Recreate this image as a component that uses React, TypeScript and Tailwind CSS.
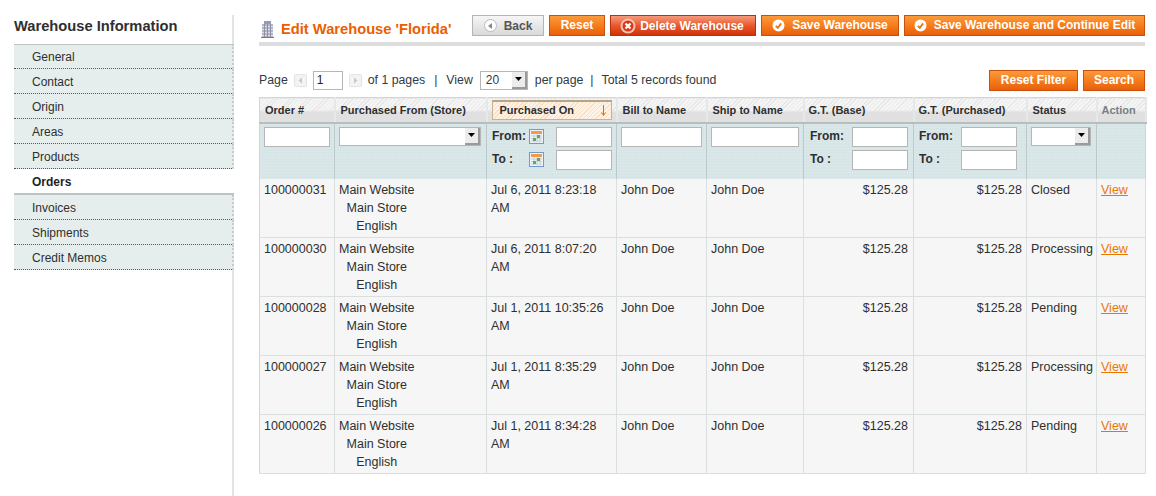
const navItems = ["General", "Contact", "Origin", "Areas", "Products", "Orders", "Invoices", "Shipments", "Credit Memos"];

const orders = [
  { id: "100000031", date: "Jul 6, 2011 8:23:18 AM", status: "Closed" },
  { id: "100000030", date: "Jul 6, 2011 8:07:20 AM", status: "Processing" },
  { id: "100000028", date: "Jul 1, 2011 10:35:26 AM", status: "Pending" },
  { id: "100000027", date: "Jul 1, 2011 8:35:29 AM", status: "Processing" },
  { id: "100000026", date: "Jul 1, 2011 8:34:28 AM", status: "Pending" },
];

const orangeBtn =
  "h-[21px] border border-[#c9500b] bg-gradient-to-b from-[#fb9a3c] via-[#f67d1b] to-[#e85f0c] text-white font-bold text-[12px] leading-[19px] flex items-center justify-center";

function CheckIcon() {
  return (
    <svg width="13" height="13" viewBox="0 0 13 13" className="mr-[7px] shrink-0">
      <circle cx="6.5" cy="6.5" r="6" fill="#fff" />
      <path d="M3.8 6.8 L5.8 8.8 L9.2 4.4" stroke="#e8760f" strokeWidth="1.8" fill="none" />
    </svg>
  );
}

function DeleteIcon() {
  return (
    <svg width="16" height="16" viewBox="0 0 16 16" className="mr-[4px] -ml-[2px] shrink-0">
      <circle cx="8" cy="8" r="7.5" fill="#f6c4b0" />
      <circle cx="8" cy="8" r="5.5" fill="#d8391a" />
      <path d="M5.5 5.5 L10.5 10.5 M10.5 5.5 L5.5 10.5" stroke="#fff" strokeWidth="2.2" />
    </svg>
  );
}

function BuildingIcon() {
  return (
    <svg width="13" height="17" viewBox="0 0 13 17">
      <rect x="3" y="0" width="7" height="3" fill="#9a9bb0" />
      <rect x="1" y="3" width="11" height="13" fill="#b4b5c6" />
      <path d="M1 5.5h11M1 8.5h11M1 11.5h11M1 14.5h11" stroke="#dddee6" strokeWidth="1" />
      <path d="M3.5 3v13M6.5 3v13M9.5 3v13" stroke="#8f90a6" strokeWidth="1" />
      <rect x="0" y="16" width="13" height="1" fill="#77788e" />
    </svg>
  );
}

function PagerArrow({ dir }: { dir: "left" | "right" }) {
  return (
    <span className="w-[13px] h-[13px] border border-[#e4e4e4] bg-[#f3f3f3] rounded-[2px] flex items-center justify-center">
      <svg width="5" height="7" viewBox="0 0 5 7">
        <path d={dir === "left" ? "M4 0.5V6.5L0.5 3.5Z" : "M1 0.5V6.5L4.5 3.5Z"} fill="#c8c8c8" />
      </svg>
    </span>
  );
}

function CalendarIcon() {
  return (
    <svg width="15" height="15" viewBox="0 0 15 15" className="shrink-0">
      <rect x="0.5" y="0.5" width="14" height="14" fill="#eef3f8" stroke="#6f9bcf" />
      <rect x="2" y="2" width="11" height="3" fill="#f49a4a" />
      <path d="M2 7h11M2 9.5h11M2 12h11M5 5.5v8M8 5.5v8M11 5.5v8" stroke="#c5d1dc" strokeWidth="1" />
      <rect x="4" y="9" width="3" height="3" fill="#6aa84f" />
      <rect x="8" y="6" width="3" height="3" fill="#6aa84f" />
    </svg>
  );
}

function SelectBox({ width, value }: { width: string; value?: string }) {
  return (
    <div className={`${width} h-[19px] border border-[#b6b6b6] bg-white flex items-center justify-between`}>
      <span className="pl-[5px] text-[12px]">{value}</span>
      <span className="w-[15px] h-[17px] bg-[#ececec] border-r-2 border-b-2 border-[#9a9a9a] flex items-center justify-center">
        <svg width="7" height="4" viewBox="0 0 7 4">
          <path d="M0 0H7L3.5 4Z" fill="#000" />
        </svg>
      </span>
    </div>
  );
}

const textInput = "block h-5 border border-[#b6b6b6] bg-white";

function RangeFilter({ withIcon }: { withIcon?: boolean }) {
  return (
    <div className="flex flex-col gap-[3px] font-bold text-[12px] text-[#2f2f2f]">
      {["From:", "To :"].map((label) => (
        <div key={label} className="flex items-center justify-between">
          <span className="flex items-center">
            <span className="w-[37px] -mt-[2px]">{label}</span>
            {withIcon && <CalendarIcon />}
          </span>
          <input className={`${textInput} w-[56px]`} readOnly />
        </div>
      ))}
    </div>
  );
}

const thBase =
  "border-r-2 border-[#e3e8e8] text-left font-bold text-[11px] px-[5px] h-[25px] bg-[linear-gradient(to_bottom,transparent_50%,#e0e0e0_55%),repeating-linear-gradient(135deg,#e6e6e6_0px,#e6e6e6_1px,#f6f6f6_1px,#f6f6f6_3px)] border-b-2 border-b-[#b8bdbd]";
const filterTd =
  "border-r border-[#bcc8ca] px-[4px] pt-[3px] align-top bg-[#d4e3e6] bg-[linear-gradient(#dbe8ea_1px,transparent_1px),linear-gradient(90deg,#dbe8ea_1px,transparent_1px)] bg-size-[3px_3px] h-[56px]";
const td = "border-r border-b border-[#dadfe0] px-[4px] pt-[2px] align-top h-[59px] bg-[#f6f6f6] leading-[18px]";

export default function App() {
  return (
    <div className="w-[1156px] h-[496px] overflow-hidden bg-white flex font-['Liberation_Sans',Arial,sans-serif] text-[12.5px] text-[#2f2f2f]">
      <aside className="w-[234px] shrink-0 pl-[14px] pt-0 mt-[15px] border-r-2 border-[#e3e3e3]">
        <h3 className="text-[14.7px] font-bold leading-[22px] h-[29px] text-[#2f2f2f]">Warehouse Information</h3>
        <ul className="-mr-[2px]">
          {navItems.map((item) => {
            const active = item === "Orders";
            return (
              <li
                key={item}
                className={
                  active
                    ? "h-[26px] pl-[18px] leading-[26px] bg-white font-bold text-[12px] border-b-2 border-[#bcc3c3] text-[#1f1f1f]"
                    : "h-[25px] pl-[18px] leading-[26px] bg-[#e6eeed] border-b border-dotted border-b-[#555] border-r-2 border-r-[#c4cbcb] text-[12px] first:shadow-[inset_0_1px_0_#bcc3c3]"
                }
              >
                {item}
              </li>
            );
          })}
        </ul>
      </aside>

      <main className="w-[886px] ml-[25px] shrink-0 pt-[15px]">
        <div className="h-[31px] border-b-[4px] border-[#dddddd] flex items-start justify-between">
          <div className="flex items-center pt-[3px] pl-[2px]">
            <BuildingIcon />
            <h3 className="ml-[7px] text-[14.7px] font-bold text-[#eb5e00] leading-[22px]">Edit Warehouse 'Florida'</h3>
          </div>
          <div className="flex gap-[5px]">
            <button className="w-[72px] h-[21px] border border-[#b4b4b4] bg-gradient-to-b from-[#f6f6f6] to-[#d9d9d9] text-[#555] font-bold text-[12px] flex items-center justify-center">
              <span className="w-[13px] h-[13px] rounded-full bg-white border border-[#bbb] mr-[7px] flex items-center justify-center">
                <svg width="4" height="6" viewBox="0 0 4 6"><path d="M4 0V6L0 3Z" fill="#888" /></svg>
              </span>
              Back
            </button>
            <button className={`${orangeBtn} w-[56px]`}>Reset</button>
            <button className="w-[146px] h-[21px] border border-[#b7320b] bg-gradient-to-b from-[#f59a7a] via-[#e9582a] to-[#cf3205] text-white font-bold text-[12px] flex items-center justify-center">
              <DeleteIcon />
              Delete Warehouse
            </button>
            <button className={`${orangeBtn} w-[138px]`}>
              <CheckIcon />
              Save Warehouse
            </button>
            <button className={`${orangeBtn} w-[241px]`}>
              <CheckIcon />
              Save Warehouse and Continue Edit
            </button>
          </div>
        </div>

        <div className="mt-[24px] h-[27px] flex items-start justify-between">
          <div className="flex items-center h-[20px] text-[12.3px] text-[#2f3b45]">
            <span>Page</span>
            <span className="ml-[6px]"><PagerArrow dir="left" /></span>
            <input className="ml-[6px] w-[30px] h-[19px] border border-[#b6b6b6] px-[3px] text-[12px] text-[#222]" defaultValue="1" />
            <span className="ml-[6px]"><PagerArrow dir="right" /></span>
            <span className="ml-[6px]">of 1 pages</span>
            <span className="ml-[9px]">|</span>
            <span className="ml-[9px]">View</span>
            <span className="ml-[7px]"><SelectBox width="w-[48px]" value="20" /></span>
            <span className="ml-[7px]">per page</span>
            <span className="ml-[7px]">|</span>
            <span className="ml-[8px]">Total 5 records found</span>
          </div>
          <div className="flex gap-[5px]">
            <button className={`${orangeBtn} w-[89px]`}>Reset Filter</button>
            <button className={`${orangeBtn} w-[62px]`}>Search</button>
          </div>
        </div>

        <table className="w-[886px] table-fixed border-collapse border border-[#cfd6d6]">
          <colgroup>
            <col className="w-[75px]" />
            <col className="w-[152px]" />
            <col className="w-[130px]" />
            <col className="w-[90px]" />
            <col className="w-[97px]" />
            <col className="w-[110px]" />
            <col className="w-[113px]" />
            <col className="w-[70px]" />
            <col className="w-[49px]" />
          </colgroup>
          <thead>
            <tr>
              <th className={thBase}>Order #</th>
              <th className={thBase}>Purchased From (Store)</th>
              <th className={thBase}>
                <div className="h-[20px] -mx-[1px] pl-[7px] pr-[4px] border border-[#c9b28d] border-t-2 border-t-[#b5a58c] bg-[repeating-linear-gradient(135deg,#fae0c3_0px,#fae0c3_1px,#fef3e6_1px,#fef3e6_3px)] flex items-center justify-between leading-none">
                  Purchased On
                  <svg width="7" height="11" viewBox="0 0 7 11">
                    <path d="M3.5 0V10M1.5 7.5L3.5 10.5L5.5 7.5" stroke="#eb6b0b" strokeWidth="1" fill="none" />
                  </svg>
                </div>
              </th>
              <th className={thBase}>Bill to Name</th>
              <th className={thBase}>Ship to Name</th>
              <th className={`${thBase} pl-[4px]`}>G.T. (Base)</th>
              <th className={`${thBase} pl-[4px]`}>G.T. (Purchased)</th>
              <th className={thBase}>Status</th>
              <th className={`${thBase} text-[#777f80] border-r-0 pl-[4px]`}>Action</th>
            </tr>
            <tr>
              <td className={filterTd}><input className={`${textInput} w-[66px]`} readOnly /></td>
              <td className={filterTd}><SelectBox width="w-[142px]" /></td>
              <td className={`${filterTd} pl-[5px] pr-[4px]`}><RangeFilter withIcon /></td>
              <td className={filterTd}><input className={`${textInput} w-[81px]`} readOnly /></td>
              <td className={filterTd}><input className={`${textInput} w-[88px]`} readOnly /></td>
              <td className={`${filterTd} pl-[6px] pr-[5px]`}><RangeFilter /></td>
              <td className={`${filterTd} pl-[5px] pr-[9px]`}><RangeFilter /></td>
              <td className={filterTd}><SelectBox width="w-[60px]" /></td>
              <td className={`${filterTd} border-r-0`} />
            </tr>
          </thead>
          <tbody>
            {orders.map((o) => (
              <tr key={o.id}>
                <td className={td}>{o.id}</td>
                <td className={td}>
                  <div className="w-fit text-center">
                    Main Website<br />Main Store<br />English
                  </div>
                </td>
                <td className={td}>{o.date}</td>
                <td className={td}>John Doe</td>
                <td className={td}>John Doe</td>
                <td className={`${td} text-right pr-[5px]`}>$125.28</td>
                <td className={`${td} text-right`}>$125.28</td>
                <td className={td}>{o.status}</td>
                <td className={td}>
                  <a className="text-[#ea7601] underline" href="#">View</a>
                </td>
              </tr>
            ))}
          </tbody>
        </table>
      </main>
    </div>
  );
}
